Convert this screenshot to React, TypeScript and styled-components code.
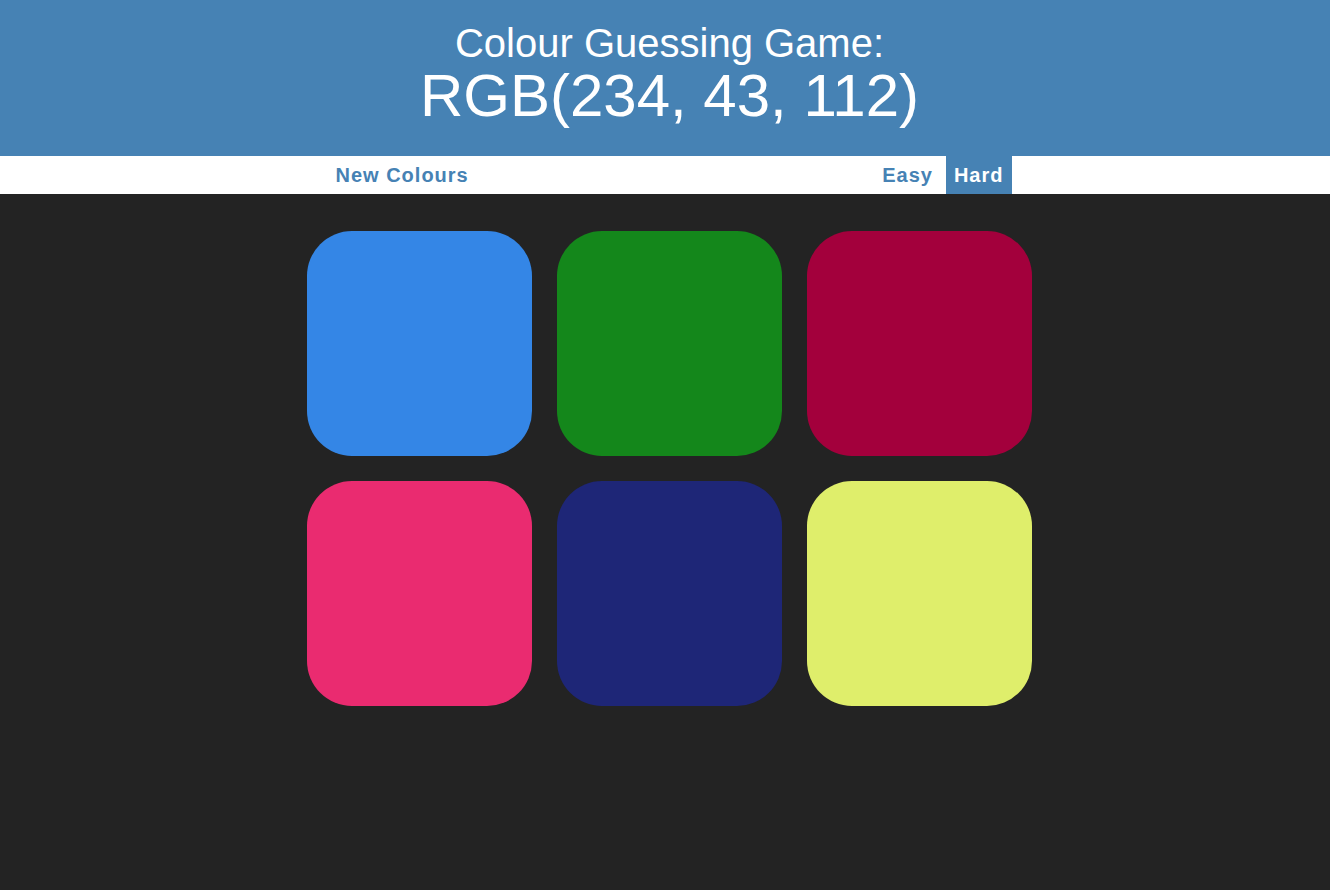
import React, { FC } from "react";
import styled, { createGlobalStyle } from "styled-components";

const squareColours = [
  "rgb(52, 134, 230)",
  "rgb(20, 135, 27)",
  "rgb(163, 0, 60)",
  "rgb(234, 43, 112)",
  "rgb(30, 38, 119)",
  "rgb(223, 238, 107)",
];

const GlobalStyle = createGlobalStyle`
  html, body {
    margin: 0;
    padding: 0;
    background: #232323;
    font-family: "Liberation Sans", Arial, sans-serif;
  }
`;

const Header: FC = () => (
  <HeaderBase>
    <HeaderLine>Colour Guessing Game:</HeaderLine>
    <HeaderRgb>RGB(234, 43, 112)</HeaderRgb>
  </HeaderBase>
);

const Stripe: FC = () => (
  <StripeBase>
    <StripeInner>
      <StripeButton>New Colours</StripeButton>
      <ModeGroup>
        <StripeButton>Easy</StripeButton>
        <StripeButton selected>Hard</StripeButton>
      </ModeGroup>
    </StripeInner>
  </StripeBase>
);

const App: FC = () => (
  <>
    <GlobalStyle />
    <Header />
    <Stripe />
    <SquareGrid>
      {squareColours.map((colour, index) => (
        <Square key={index} colour={colour} />
      ))}
    </SquareGrid>
  </>
);

export default App;

const HeaderBase = styled.h1`
  margin: 0;
  padding: 20px 0 30px 9px;
  background: steelblue;
  color: #ffffff;
  text-align: center;
  font-weight: normal;
`;

const HeaderLine = styled.div`
  font-size: 40px;
  line-height: 46px;
`;

const HeaderRgb = styled.div`
  font-size: 60px;
  line-height: 60px;
`;

const StripeBase = styled.div`
  display: flex;
  justify-content: center;
  height: 38px;
  padding-left: 9px;
  background: #ffffff;
`;

const StripeInner = styled.div`
  display: flex;
  justify-content: space-between;
  width: 684px;
`;

const ModeGroup = styled.div`
  display: flex;
  gap: 5px;
`;

const StripeButton = styled.button<{ selected?: boolean }>`
  height: 100%;
  padding: 0 8px;
  border: none;
  background: ${({ selected }) => (selected ? "steelblue" : "none")};
  color: ${({ selected }) => (selected ? "#ffffff" : "steelblue")};
  font-family: "Liberation Sans", Arial, sans-serif;
  font-size: 20px;
  font-weight: 700;
  letter-spacing: 1px;
  cursor: pointer;
`;

const SquareGrid = styled.div`
  display: grid;
  grid-template-columns: repeat(3, 225px);
  gap: 25px;
  justify-content: center;
  padding: 37px 0 0 9px;
`;

const Square = styled.div<{ colour: string }>`
  width: 225px;
  height: 225px;
  border-radius: 45px;
  background: ${({ colour }) => colour};
`;
